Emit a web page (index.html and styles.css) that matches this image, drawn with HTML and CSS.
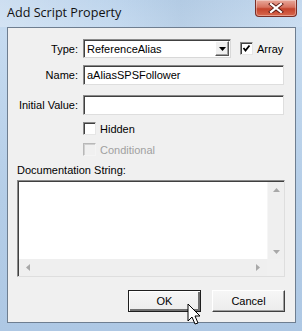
FILE: index.html
```html
<!DOCTYPE html>
<html>
<head>
<meta charset="utf-8">
<link rel="stylesheet" href="styles.css">
</head>
<body>
<div class="window">
  <div class="titlebar">
    <span class="title">Add Script Property</span>
    <div class="close"><svg width="16" height="10" viewBox="0 0 16 10"><path d="M3 1 L13 9 M13 1 L3 9" stroke="#5a1a14" stroke-width="4" stroke-linecap="square"/><path d="M3 1 L13 9 M13 1 L3 9" stroke="#ffffff" stroke-width="2.2" stroke-linecap="square"/></svg></div>
  </div>
  <div class="client">
    <div class="row row-type">
      <label class="lbl">Type:</label>
      <div class="combo">
        <span class="combo-text">ReferenceAlias</span>
        <span class="combo-btn"><svg width="7" height="4" viewBox="0 0 7 4"><path d="M0 0 H7 L3.5 4 Z" fill="#000"/></svg></span>
      </div>
      <span class="check checked"><svg width="9" height="9" viewBox="0 0 9 9"><path d="M1.5 4 L3.5 6.5 L7.5 1.5" stroke="#000" stroke-width="1.8" fill="none"/></svg></span>
      <span class="check-text">Array</span>
    </div>
    <div class="row row-name">
      <label class="lbl">Name:</label>
      <div class="edit">aAliasSPSFollower</div>
    </div>
    <div class="row row-init">
      <label class="lbl">Initial Value:</label>
      <div class="edit"></div>
    </div>
    <div class="row row-hidden">
      <span class="check"></span>
      <span class="check-text">Hidden</span>
    </div>
    <div class="row row-cond">
      <span class="check disabled"></span>
      <span class="check-text disabled-text">Conditional</span>
    </div>
    <div class="doc-label">Documentation String:</div>
    <div class="memo">
      <div class="memo-body">
        <div class="memo-text"></div>
        <div class="vscroll">
          <span class="arrow"><svg width="7" height="4" viewBox="0 0 7 4"><path d="M0 4 H7 L3.5 0 Z" fill="#a8a8a8"/></svg></span>
          <span class="arrow"><svg width="7" height="4" viewBox="0 0 7 4"><path d="M0 0 H7 L3.5 4 Z" fill="#a8a8a8"/></svg></span>
        </div>
      </div>
      <div class="hscroll-row">
        <div class="hscroll">
          <span class="arrow"><svg width="4" height="7" viewBox="0 0 4 7"><path d="M4 0 V7 L0 3.5 Z" fill="#a8a8a8"/></svg></span>
          <span class="arrow"><svg width="4" height="7" viewBox="0 0 4 7"><path d="M0 0 V7 L4 3.5 Z" fill="#a8a8a8"/></svg></span>
        </div>
        <div class="corner"></div>
      </div>
    </div>
    <div class="buttons">
      <div class="btn default">OK</div>
      <div class="btn">Cancel</div>
    </div>
  </div>
  <svg class="cursor" width="14" height="23" viewBox="0 0 14 23"><path d="M1 1 L1 18 L5 14 L8 21 L11 20 L8 13 L13 13 Z" fill="#fff" stroke="#000" stroke-width="1" stroke-linejoin="round"/></svg>
</div>
</body>
</html>
```
FILE: styles.css
```css
html, body {
  margin: 0;
  padding: 0;
  background: #b9d1ea;
}
.window {
  position: relative;
  width: 302px;
  height: 331px;
  box-sizing: border-box;
  background: linear-gradient(180deg, #bdd4ec 0%, #c6dbf0 10%, #b4cde7 60%, #aec8e4 100%);
  display: flex;
  flex-direction: column;
  font-family: "Liberation Sans", Arial, sans-serif;
  font-size: 11px;
  color: #000;
  overflow: hidden;
}
.titlebar {
  height: 27px;
  position: relative;
  background: linear-gradient(90deg, rgba(255,255,255,0.25) 0%, rgba(255,255,255,0) 40%, rgba(120,150,180,0.15) 60%, rgba(255,255,255,0.1) 100%);
}
.title {
  position: absolute;
  left: 7px;
  top: 4px;
  font-family: "Open Sans", "Noto Sans", sans-serif;
  font-size: 12.6px;
  color: #111;
}
.close {
  position: absolute;
  left: 255px;
  top: 0;
  width: 42px;
  height: 17px;
  box-sizing: border-box;
  border: 1px solid #7a2e26;
  border-top: none;
  border-radius: 0 0 4px 4px;
  background: linear-gradient(180deg, #e8a99c 0%, #d7725f 45%, #c4432c 55%, #d8684d 100%);
  box-shadow: inset 0 0 0 1px rgba(255,255,255,0.35);
  display: flex;
  align-items: center;
  justify-content: center;
}
.client {
  margin: 0 6px 8px 7px;
  flex: 1;
  background: #f0f0f0;
  border: 1px solid #6e7e90;
  display: flex;
  flex-direction: column;
  padding: 0 10px 0 9px;
}
.row {
  display: flex;
  align-items: center;
}
.lbl {
  width: 61px;
  text-align: right;
  margin-right: 5px;
  flex: none;
}
.row-type { margin-top: 11px; height: 19px; }
.row-name { margin-top: 7px; height: 20px; }
.row-init { margin-top: 10px; height: 20px; }
.row-hidden { margin-top: 7px; height: 13px; padding-left: 66px; }
.row-cond { margin-top: 8px; height: 13px; padding-left: 66px; }
.combo {
  width: 148px;
  height: 19px;
  box-sizing: border-box;
  background: #fff;
  border: 1px solid #8a8a8a;
  border-right-color: #d8d8d8;
  border-bottom-color: #d8d8d8;
  box-shadow: inset 1px 1px 0 #404040;
  display: flex;
  align-items: center;
  justify-content: space-between;
  padding-left: 3px;
}
.combo-btn {
  width: 14px;
  height: 15px;
  margin-right: 1px;
  box-sizing: border-box;
  background: #f0f0f0;
  border: 1px solid #fff;
  border-right-color: #555;
  border-bottom-color: #555;
  box-shadow: inset -1px -1px 0 #a0a0a0;
  display: flex;
  align-items: center;
  justify-content: center;
}
.check {
  width: 13px;
  height: 13px;
  box-sizing: border-box;
  background: #fff;
  border: 1px solid #8a8a8a;
  border-right-color: #e6e6e6;
  border-bottom-color: #e6e6e6;
  box-shadow: inset 1px 1px 0 #404040;
  display: inline-flex;
  align-items: center;
  justify-content: center;
  flex: none;
}
.row-type .check { margin-left: 9px; }
.check-text { margin-left: 4px; }
.check.disabled {
  background: #f0f0f0;
  border-color: #b8b8b8 #f4f4f4 #f4f4f4 #b8b8b8;
  box-shadow: inset 1px 1px 0 #d0d0d0;
}
.disabled-text { color: #a0a0a0; }
.edit {
  width: 201px;
  height: 20px;
  box-sizing: border-box;
  background: #fff;
  border: 1px solid #8a8a8a;
  border-right-color: #dedede;
  border-bottom-color: #dedede;
  box-shadow: inset 1px 1px 0 #404040;
  padding-left: 3px;
  display: flex;
  align-items: center;
}
.doc-label {
  margin-top: 8px;
  height: 13px;
  line-height: 13px;
}
.memo {
  margin-top: 3px;
  width: 268px;
  height: 97px;
  box-sizing: border-box;
  border: 1px solid #8a8a8a;
  border-right-color: #dedede;
  border-bottom-color: #dedede;
  box-shadow: inset 1px 1px 0 #404040;
  background: #fff;
  display: flex;
  flex-direction: column;
  padding: 1px 0 0 1px;
}
.memo-body {
  flex: 1;
  display: flex;
}
.memo-text { flex: 1; }
.vscroll {
  width: 17px;
  background: #efefef;
  border-left: 1px solid #f6f6f6;
  display: flex;
  flex-direction: column;
  justify-content: space-between;
  align-items: center;
  padding: 6px 0 5px;
  box-sizing: border-box;
}
.hscroll-row {
  height: 17px;
  display: flex;
}
.hscroll {
  flex: 1;
  background: #efefef;
  display: flex;
  justify-content: space-between;
  align-items: center;
  padding: 0 7px 0 7px;
}
.corner {
  width: 17px;
  background: #f0f0f0;
}
.arrow { display: flex; }
.buttons {
  margin-top: 13px;
  display: flex;
  justify-content: flex-end;
  gap: 11px;
}
.btn {
  width: 73px;
  height: 22px;
  box-sizing: border-box;
  background: linear-gradient(180deg, #f6f6f6, #ececec);
  border: 1px solid #fff;
  border-right-color: #404040;
  border-bottom-color: #404040;
  box-shadow: inset -1px -1px 0 #a0a0a0;
  display: flex;
  align-items: center;
  justify-content: center;
}
.btn.default {
  border: 1px solid #1e1e1e;
  box-shadow: inset 1px 1px 0 #fff, inset -2px -2px 0 #707070;
}
.cursor {
  position: absolute;
  left: 187px;
  top: 303px;
}
```
